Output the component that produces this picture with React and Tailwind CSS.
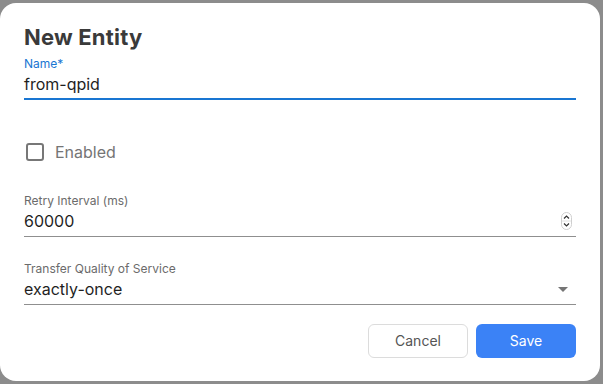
import { useState } from "react";

function Spinner() {
  return (
    <svg width="11" height="18" viewBox="0 0 11 18" className="shrink-0">
      <rect x="0.5" y="0.5" width="10" height="17" rx="5" fill="#fff" stroke="#cfcfcf" />
      <line x1="1" y1="9" x2="10" y2="9" stroke="#e2e2e2" />
      <path d="M3 6.5 L5.5 4 L8 6.5" fill="none" stroke="#333" strokeWidth="1.2" />
      <path d="M3 11.5 L5.5 14 L8 11.5" fill="none" stroke="#333" strokeWidth="1.2" />
    </svg>
  );
}

function ArrowDrop() {
  return (
    <svg width="10" height="5" viewBox="0 0 10 5" className="shrink-0">
      <path d="M0 0 L10 0 L5 5 Z" fill="#757575" />
    </svg>
  );
}

function Field({ label, value, focused, adornment }) {
  return (
    <div
      className={
        "flex flex-col " +
        (focused
          ? "border-b-2 border-[#1976d2] pb-[2px]"
          : "border-b border-[#8f8f8f] pb-[3px]")
      }
    >
      <span
        className={
          "h-4 text-xs leading-4 " + (focused ? "text-[#1976d2]" : "text-[#6b6b6b]")
        }
      >
        {label}
      </span>
      <div className="flex h-6 items-center justify-between">
        <span className="text-base leading-6 text-[#1f1f1f]">{value}</span>
        {adornment}
      </div>
    </div>
  );
}

export default function App() {
  const [enabled, setEnabled] = useState(false);

  return (
    <div
      className="h-[384px] w-[603px] bg-[#8c8c8c] pt-[3px]"
      style={{ fontFamily: "Inter, 'Noto Sans', sans-serif" }}
    >
      <div className="flex h-[378px] w-[600px] flex-col rounded-2xl bg-white px-6 pt-5">
        <h1 className="text-[22px] font-bold leading-7 tracking-[0.2px] text-[#3a3a3a]">
          New Entity
        </h1>

        <div className="mt-[5px]">
          <Field label="Name*" value="from-qpid" focused />
        </div>

        <label
          className="mt-[40px] flex h-6 cursor-pointer items-center gap-[11px] pl-[2px]"
          onClick={() => setEnabled(!enabled)}
        >
          <span className="h-[18px] w-[18px] rounded-[3px] border-2 border-[#777]" />
          <span className="text-base text-[#757575]">Enabled</span>
        </label>

        <div className="mt-[29px]">
          <Field
            label="Retry Interval (ms)"
            value="60000"
            adornment={
              <span className="mr-[4px]">
                <Spinner />
              </span>
            }
          />
        </div>

        <div className="mt-[24px]">
          <Field
            label="Transfer Quality of Service"
            value="exactly-once"
            adornment={
              <span className="mr-[8px]">
                <ArrowDrop />
              </span>
            }
          />
        </div>

        <div className="mt-[19px] flex justify-end gap-2">
          <button className="h-[34px] w-[100px] rounded-md border border-[#dcdcdc] bg-white text-sm text-[#555]">
            Cancel
          </button>
          <button className="h-[34px] w-[100px] rounded-md bg-[#3b82f6] text-sm text-white">
            Save
          </button>
        </div>
      </div>
    </div>
  );
}
